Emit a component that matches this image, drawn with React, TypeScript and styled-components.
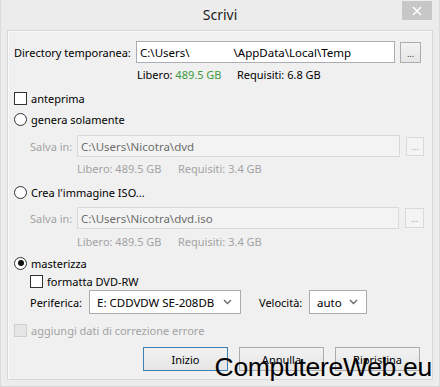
import React from "react";
import styled, { createGlobalStyle, css } from "styled-components";

const Global = createGlobalStyle`
  html, body { margin: 0; padding: 0; background: #ececec; }
  body { font-family: "Segoe UI", "Noto Sans", "Open Sans", sans-serif; font-size: 11px; color: #000; }
  * { box-sizing: border-box; }
`;

const Window = styled.div`
  width: 440px;
  height: 387px;
  background: #ececec;
  border-left: 1px solid #dadada;
  border-right: 1px solid #dadada;
  border-bottom: 1px solid #d6d6d6;
  display: flex;
  flex-direction: column;
  overflow: hidden;
  position: relative;
`;

const TitleBar = styled.div`
  height: 30px;
  flex: none;
  display: flex;
  align-items: center;
  justify-content: center;
  position: relative;
`;

const Title = styled.div`
  font-size: 14px;
  color: #1a1a1a;
  margin-top: -1px;
`;

const CloseButton = styled.div`
  position: absolute;
  top: 1px;
  right: 7px;
  width: 30px;
  height: 19px;
  background: #c7c7c7;
  display: flex;
  align-items: center;
  justify-content: center;
`;

const Panel = styled.div`
  flex: 1;
  margin: 0 6px 6px 6px;
  border: 1px solid #d7d7d7;
  box-shadow: inset 1px 1px 0 #fafafa;
  background: #f0f0f0;
  padding: 10px 0 0 6px;
  display: flex;
  flex-direction: column;
  position: relative;
`;

const Row = styled.div<{ $mt?: number; $h?: number; $indent?: number }>`
  display: flex;
  align-items: center;
  height: ${(p) => p.$h ?? 16}px;
  margin-top: ${(p) => p.$mt ?? 0}px;
  padding-left: ${(p) => p.$indent ?? 0}px;
  flex: none;
  white-space: nowrap;
`;

const Label = styled.span<{ $w?: number; $disabled?: boolean; $ml?: number }>`
  display: inline-block;
  width: ${(p) => (p.$w ? `${p.$w}px` : "auto")};
  margin-left: ${(p) => p.$ml ?? 0}px;
  flex: none;
  color: ${(p) => (p.$disabled ? "#a3a3a3" : "#000")};
`;

const TextBox = styled.div<{ $w: number; $disabled?: boolean }>`
  width: ${(p) => p.$w}px;
  height: 22px;
  flex: none;
  border: 1px solid ${(p) => (p.$disabled ? "#d9d9d9" : "#abadb3")};
  background: ${(p) => (p.$disabled ? "#f3f3f3" : "#fff")};
  color: ${(p) => (p.$disabled ? "#6d6d6d" : "#000")};
  display: flex;
  align-items: center;
  padding-left: 3px;
  font-size: 11.5px;
`;

const Gap = styled.span<{ $w: number }>`
  display: inline-block;
  width: ${(p) => p.$w}px;
`;

const DotsButton = styled.div<{ $disabled?: boolean; $w: number; $h: number; $ml: number }>`
  width: ${(p) => p.$w}px;
  height: ${(p) => p.$h}px;
  margin-left: ${(p) => p.$ml}px;
  flex: none;
  border: 1px solid ${(p) => (p.$disabled ? "#dadada" : "#acacac")};
  background: ${(p) => (p.$disabled ? "#f4f4f4" : "linear-gradient(#f2f2f2, #e6e6e6)")};
  color: ${(p) => (p.$disabled ? "#a0a0a0" : "#333")};
  display: flex;
  align-items: flex-end;
  justify-content: center;
  padding-bottom: 4px;
  font-size: 9px;
  line-height: 1;
`;

const Info = styled.div<{ $disabled?: boolean }>`
  display: flex;
  color: ${(p) => (p.$disabled ? "#a3a3a3" : "#000")};
`;

const InfoItem = styled.span<{ $w: number }>`
  width: ${(p) => p.$w}px;
  flex: none;
`;

const Green = styled.span`
  color: #3c9a3c;
`;

const Box = styled.span<{ $disabled?: boolean }>`
  width: 13px;
  height: 13px;
  flex: none;
  border: 1px solid ${(p) => (p.$disabled ? "#cfcfcf" : "#333")};
  background: ${(p) => (p.$disabled ? "#e6e6e6" : "#fff")};
  margin-right: 4px;
`;

const Radio = styled.span<{ $checked?: boolean }>`
  width: 13px;
  height: 13px;
  flex: none;
  border-radius: 50%;
  border: 1px solid #333;
  background: #fff;
  margin-right: 4px;
  position: relative;
  ${(p) =>
    p.$checked &&
    css`
      &::after {
        content: "";
        position: absolute;
        left: 2.5px;
        top: 2.5px;
        width: 6px;
        height: 6px;
        border-radius: 50%;
        background: #111;
      }
    `}
`;

const Select = styled.div<{ $w: number }>`
  width: ${(p) => p.$w}px;
  height: 24px;
  flex: none;
  border: 1px solid #acacac;
  background: #fff;
  display: flex;
  align-items: center;
  justify-content: space-between;
  padding: 0 8px 0 7px;
  font-size: 11.5px;
`;

const ButtonRow = styled.div`
  display: flex;
  gap: 11px;
  margin-top: 9px;
  padding-left: 129px;
`;

const Button = styled.div<{ $default?: boolean }>`
  width: 85px;
  height: 24px;
  border: 1px solid ${(p) => (p.$default ? "#3c7fb1" : "#acacac")};
  background: linear-gradient(#f2f2f2, #e5e5e5);
  display: flex;
  align-items: center;
  justify-content: center;
  color: #000;
`;

const Watermark = styled.div`
  position: absolute;
  right: 0px;
  bottom: -1px;
  font-family: "Liberation Sans", Arial, sans-serif;
  font-size: 26.5px;
  letter-spacing: -0.3px;
  color: #000;
  line-height: 1;
`;

const Chevron = () => (
  <svg width="9" height="6" viewBox="0 0 9 6">
    <path d="M1 1l3.5 3.5L8 1" fill="none" stroke="#6a6a6a" strokeWidth="1.4" />
  </svg>
);

export default function App() {
  return (
    <>
      <Global />
      <Window>
        <TitleBar>
          <Title>Scrivi</Title>
          <CloseButton>
            <svg width="10" height="10" viewBox="0 0 10 10">
              <path d="M1 1l8 8M9 1l-8 8" stroke="#fff" strokeWidth="1.5" />
            </svg>
          </CloseButton>
        </TitleBar>
        <Panel>
          <Row $h={22}>
            <Label $w={122}>Directory temporanea:</Label>
            <TextBox $w={259}>
              C:\Users\<Gap $w={44} />\AppData\Local\Temp
            </TextBox>
            <DotsButton $w={21} $h={21} $ml={5}>...</DotsButton>
          </Row>
          <Row $mt={4} $h={14} $indent={123}>
            <Info>
              <InfoItem $w={100}>
                Libero: <Green>489.5 GB</Green>
              </InfoItem>
              <InfoItem $w={100}>Requisiti: 6.8 GB</InfoItem>
            </Info>
          </Row>
          <Row $mt={9}>
            <Box />
            anteprima
          </Row>
          <Row $mt={5}>
            <Radio />
            genera solamente
          </Row>
          <Row $mt={8} $h={22} $indent={16}>
            <Label $w={47} $disabled>
              Salva in:
            </Label>
            <TextBox $w={323} $disabled>
              C:\Users\Nicotra\dvd
            </TextBox>
            <DotsButton $disabled $w={18} $h={19} $ml={6}>...</DotsButton>
          </Row>
          <Row $mt={4} $h={14} $indent={63}>
            <Info $disabled>
              <InfoItem $w={101}>Libero: 489.5 GB</InfoItem>
              <InfoItem $w={100}>Requisiti: 3.4 GB</InfoItem>
            </Info>
          </Row>
          <Row $mt={9}>
            <Radio />
            Crea l'immagine ISO...
          </Row>
          <Row $mt={7} $h={22} $indent={16}>
            <Label $w={47} $disabled>
              Salva in:
            </Label>
            <TextBox $w={322} $disabled>
              C:\Users\Nicotra\dvd.iso
            </TextBox>
            <DotsButton $disabled $w={19} $h={20} $ml={6}>...</DotsButton>
          </Row>
          <Row $mt={5} $h={14} $indent={63}>
            <Info $disabled>
              <InfoItem $w={101}>Libero: 489.5 GB</InfoItem>
              <InfoItem $w={100}>Requisiti: 3.4 GB</InfoItem>
            </Info>
          </Row>
          <Row $mt={7}>
            <Radio $checked />
            masterizza
          </Row>
          <Row $mt={2} $indent={16}>
            <Box />
            formatta DVD-RW
          </Row>
          <Row $mt={1} $h={24} $indent={16}>
            <Label $w={59}>Periferica:</Label>
            <Select $w={152}>
              E: CDDVDW SE-208DB
              <Chevron />
            </Select>
            <Label $w={50} $ml={18}>
              Velocità:
            </Label>
            <Select $w={58}>
              auto
              <Chevron />
            </Select>
          </Row>
          <Row $mt={8}>
            <Box $disabled />
            <Label $disabled>aggiungi dati di correzione errore</Label>
          </Row>
          <ButtonRow>
            <Button $default>Inizio</Button>
            <Button>Annulla</Button>
            <Button>Ripristina</Button>
          </ButtonRow>
          <Watermark>ComputereWeb.eu</Watermark>
        </Panel>
      </Window>
    </>
  );
}
